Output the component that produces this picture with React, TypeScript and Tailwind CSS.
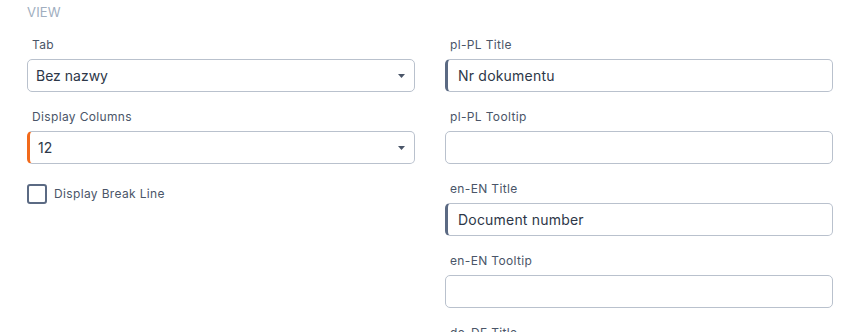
import React from 'react'

const font = { fontFamily: 'Inter, "Noto Sans", sans-serif' }

const Caret = () => (
  <svg width="7" height="4" viewBox="0 0 7 4" className="shrink-0">
    <path d="M0 0h7L3.5 4z" fill="#4a5568" />
  </svg>
)

const Label: React.FC<{ text: string }> = ({ text }) => (
  <div className="h-[18px] mb-[5px] pl-[5px] text-[12px] leading-[18px] tracking-[0.35px] text-[#4a5568]">{text}</div>
)

const SelectField: React.FC<{ label: string; value: string; accent?: string }> = ({ label, value, accent }) => (
  <div className="mb-[16px]">
    <Label text={label} />
    <div
      className={`h-[33px] flex items-center justify-between rounded-[5px] border border-[#b9c1cd] pl-[8px] pr-[9px] ${
        accent === 'orange' ? 'border-l-[3px] border-l-[#f26a1b]' : ''
      }`}
    >
      <span className="text-[14px] text-[#2d3748]">{value}</span>
      <Caret />
    </div>
  </div>
)

const TextField: React.FC<{ label: string; value?: string }> = ({ label, value }) => (
  <div className="mb-[16px]">
    <Label text={label} />
    <div
      className={`h-[33px] flex items-center rounded-[5px] border border-[#b9c1cd] pl-[10px] ${
        value ? 'border-l-[3px] border-l-[#5b6a83]' : ''
      }`}
    >
      <span className="text-[14px] tracking-[0.2px] text-[#2d3748]">{value}</span>
    </div>
  </div>
)

export default function App() {
  return (
    <div className="w-[858px] h-[332px] overflow-hidden bg-white pl-[27px] pr-[25px]" style={font}>
      <div className="pt-[4px] h-[20px] text-[13px] leading-[16px] text-[#a0aec0] tracking-[0.2px]">VIEW</div>
      <div className="grid grid-cols-2 gap-x-[30px] mt-[16px]">
        <div className="flex flex-col">
          <SelectField label="Tab" value="Bez nazwy" />
          <SelectField label="Display Columns" value="12" accent="orange" />
          <div className="flex items-center gap-[7px] pt-[4px]">
            <div className="w-[20px] h-[20px] rounded-[3px] border-2 border-[#5b6a83]" />
            <span className="text-[12px] tracking-[0.35px] text-[#4a5568]">Display Break Line</span>
          </div>
        </div>
        <div className="flex flex-col">
          <TextField label="pl-PL Title" value="Nr dokumentu" />
          <TextField label="pl-PL Tooltip" />
          <TextField label="en-EN Title" value="Document number" />
          <TextField label="en-EN Tooltip" />
          <TextField label="de-DE Title" />
        </div>
      </div>
    </div>
  )
}
